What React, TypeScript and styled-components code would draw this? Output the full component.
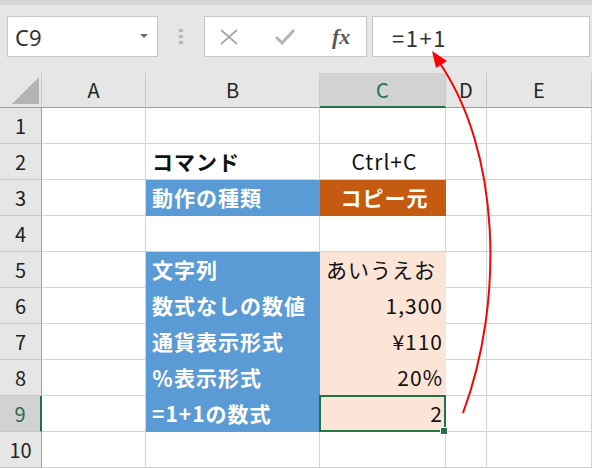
import React from "react";
import styled, { createGlobalStyle, css } from "styled-components";

const GREEN = "#217346";
const BLUE = "#5b9bd5";
const ORANGE = "#c55a11";
const PEACH = "#fce4d6";
const GRID = "#d4d4d4";

type Align = "left" | "center" | "right";

type CellSpec = {
  text?: string;
  fill?: string;
  color?: string;
  bold?: boolean;
  align?: Align;
};

type RowSpec = { b?: CellSpec; c?: CellSpec };

const blue = (text: string): CellSpec => ({ text, fill: BLUE, color: "#fff", bold: true });
const peach = (text: string, align: Align = "right"): CellSpec => ({ text, fill: PEACH, align });

const rows: RowSpec[] = [
  {},
  { b: { text: "コマンド", bold: true }, c: { text: "Ctrl+C", align: "center" } },
  {
    b: blue("動作の種類"),
    c: { text: "コピー元", fill: ORANGE, color: "#fff", bold: true, align: "center" },
  },
  {},
  { b: blue("文字列"), c: peach("あいうえお", "left") },
  { b: blue("数式なしの数値"), c: peach("1,300") },
  { b: blue("通貨表示形式"), c: peach("¥110") },
  { b: blue("％表示形式"), c: peach("20%") },
  { b: blue("=1+1の数式"), c: peach("2") },
  {},
];

const columns = ["A", "B", "C", "D", "E"];
const activeCol = "C";
const activeRow = 9;

function App() {
  return (
    <>
      <GlobalStyle />
      <Page>
        <Toolbar>
          <NameBox>
            C9
            <DropArrow />
          </NameBox>
          <Grip>
            <span />
            <span />
            <span />
          </Grip>
          <FormulaButtons>
            <IconSlot>
              <svg width="18" height="16" viewBox="0 0 18 16">
                <path d="M1 1 L17 15 M17 1 L1 15" stroke="#a6a6a6" strokeWidth="1.7" fill="none" />
              </svg>
            </IconSlot>
            <IconSlot>
              <svg width="20" height="16" viewBox="0 0 20 16">
                <path d="M1 8 L7 14 L19 1" stroke="#b5b5b5" strokeWidth="3" fill="none" />
              </svg>
            </IconSlot>
            <Fx>fx</Fx>
          </FormulaButtons>
          <FormulaInput>=1+1</FormulaInput>
        </Toolbar>

        <Sheet>
          <Corner />
          {columns.map((col) => (
            <ColHeader key={col} $active={col === activeCol}>
              {col}
            </ColHeader>
          ))}
          {rows.map((row, i) => {
            const n = i + 1;
            const selected = n === activeRow;
            return (
              <React.Fragment key={n}>
                <RowHeader $active={selected}>{n}</RowHeader>
                <Cell />
                <Cell {...toProps(row.b)}>{row.b?.text}</Cell>
                <Cell {...toProps(row.c)} $selected={selected}>
                  {row.c?.text}
                  {selected && <FillHandle />}
                </Cell>
                <Cell />
                <Cell />
              </React.Fragment>
            );
          })}
        </Sheet>

        <Arrow width="592" height="469" viewBox="0 0 592 469">
          <path d="M463 413 C505 300, 500 150, 439 62" stroke="#ff0000" strokeWidth="2" fill="none" />
          <polygon points="432,51 447,61 436,68" fill="#ff0000" />
        </Arrow>
      </Page>
    </>
  );
}

function toProps(spec?: CellSpec) {
  return {
    $fill: spec?.fill,
    $color: spec?.color,
    $bold: spec?.bold,
    $align: spec?.align ?? "left",
  };
}

export default App;

const GlobalStyle = createGlobalStyle`
  html, body {
    margin: 0;
    padding: 0;
    background: #fff;
    font-family: "Noto Sans CJK JP", "Noto Sans", sans-serif;
  }
`;

const Page = styled.div`
  position: relative;
  width: 592px;
  height: 469px;
  overflow: hidden;
  background: #fff;
`;

const Toolbar = styled.div`
  box-sizing: border-box;
  height: 73px;
  display: flex;
  align-items: flex-start;
  padding: 11px 2px 0 7px;
  border-top: 5px solid #d6d6d6;
  background: #e6e6e6;
`;

const NameBox = styled.div`
  position: relative;
  box-sizing: border-box;
  width: 151px;
  height: 41px;
  display: flex;
  align-items: center;
  padding-left: 7px;
  background: #fff;
  border: 1px solid #c6c6c6;
  font-family: "Noto Sans", sans-serif;
  font-size: 22px;
  color: #333;
`;

const DropArrow = styled.span`
  position: absolute;
  right: 9px;
  top: 17px;
  border-left: 4px solid transparent;
  border-right: 4px solid transparent;
  border-top: 4px solid #6b6b6b;
`;

const Grip = styled.div`
  width: 46px;
  height: 41px;
  display: flex;
  flex-direction: column;
  align-items: center;
  justify-content: center;
  gap: 3px;

  span {
    width: 4px;
    height: 3px;
    background: #b6b6b6;
  }
`;

const FormulaButtons = styled.div`
  box-sizing: border-box;
  width: 163px;
  height: 41px;
  display: flex;
  align-items: center;
  padding-left: 15px;
  background: #fff;
  border: 1px solid #c6c6c6;
`;

const IconSlot = styled.div`
  width: 55px;
  display: flex;
  align-items: center;
`;

const Fx = styled.span`
  font-family: "Liberation Serif", serif;
  font-style: italic;
  font-weight: bold;
  font-size: 22px;
  color: #5a5a5a;
  margin-left: 2px;
`;

const FormulaInput = styled.div`
  box-sizing: border-box;
  flex: 1;
  height: 41px;
  margin-left: 5px;
  display: flex;
  align-items: center;
  padding-left: 19px;
  background: #fff;
  border: 1px solid #c6c6c6;
  font-size: 22px;
  letter-spacing: 1.5px;
  color: #333;
`;

const Sheet = styled.div`
  display: grid;
  grid-template-columns: 42px 104px 174px 126px 41px 105px;
  grid-template-rows: 35px repeat(10, 36px);
  font-family: "Noto Sans CJK JP", sans-serif;
`;

const headerBase = css`
  box-sizing: border-box;
  display: flex;
  align-items: center;
  justify-content: center;
  background: #e6e6e6;
  font-size: 20px;
  color: #222;
  line-height: 1;
`;

const Corner = styled.div`
  ${headerBase};
  position: relative;
  border-right: 1px solid #c8c8c8;
  border-bottom: 1px solid #9e9e9e;

  &::after {
    content: "";
    position: absolute;
    left: 12px;
    top: 4px;
    width: 27px;
    height: 27px;
    background: #b4b4b4;
    clip-path: polygon(100% 0, 100% 100%, 0 100%);
  }
`;

const ColHeader = styled.div<{ $active?: boolean }>`
  ${headerBase};
  border-right: 1px solid #c8c8c8;
  border-bottom: 1px solid #9e9e9e;
  ${(p) =>
    p.$active &&
    css`
      background: #d2d2d2;
      color: ${GREEN};
      border-bottom: 2px solid ${GREEN};
    `}
`;

const RowHeader = styled.div<{ $active?: boolean }>`
  ${headerBase};
  border-right: 1px solid #9e9e9e;
  border-bottom: 1px solid #c8c8c8;
  ${(p) =>
    p.$active &&
    css`
      background: #d2d2d2;
      color: #2e6b4f;
      border-right: 2px solid ${GREEN};
    `}
`;

const Cell = styled.div<{
  $fill?: string;
  $color?: string;
  $bold?: boolean;
  $align?: Align;
  $selected?: boolean;
}>`
  position: relative;
  box-sizing: border-box;
  display: flex;
  align-items: center;
  justify-content: ${(p) =>
    p.$align === "right" ? "flex-end" : p.$align === "center" ? "center" : "flex-start"};
  padding: 0 2px 0 6px;
  white-space: nowrap;
  font-size: 21px;
  letter-spacing: 1px;
  line-height: 1;
  font-weight: ${(p) => (p.$bold ? 700 : 400)};
  color: ${(p) => p.$color ?? "#111"};
  background: ${(p) => p.$fill ?? "transparent"};
  border-right: 1px solid ${(p) => p.$fill ?? GRID};
  border-bottom: 1px solid ${(p) => p.$fill ?? GRID};

  ${(p) =>
    p.$selected &&
    css`
      &::after {
        content: "";
        position: absolute;
        inset: -1px -1px -1px -1px;
        border: 2px solid ${GREEN};
        z-index: 1;
      }
    `}
`;

const FillHandle = styled.span`
  position: absolute;
  right: -3px;
  bottom: -4px;
  width: 6px;
  height: 6px;
  background: ${GREEN};
  border: 1px solid #fff;
  z-index: 2;
`;

const Arrow = styled.svg`
  position: absolute;
  left: 0;
  top: 0;
  pointer-events: none;
`;
